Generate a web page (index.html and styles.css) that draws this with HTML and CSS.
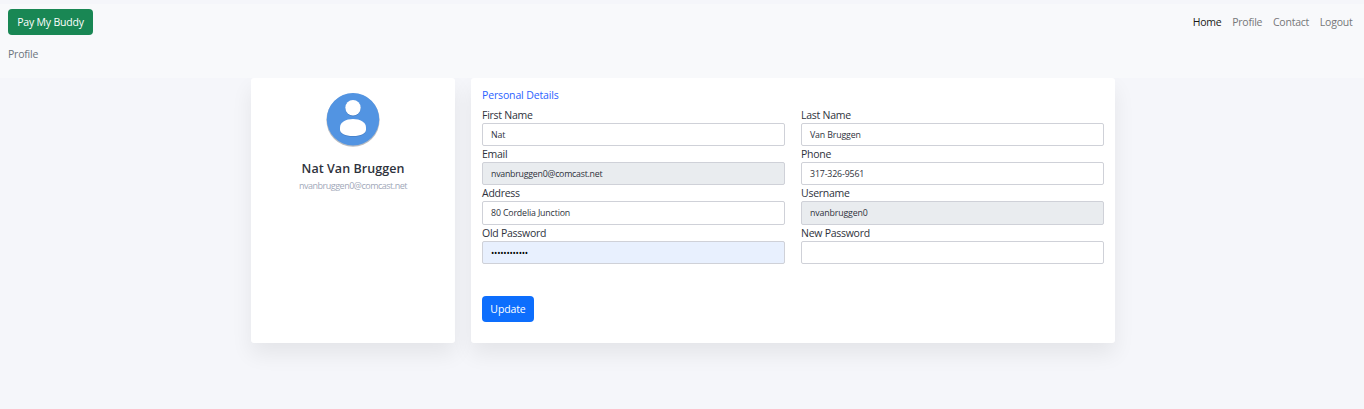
FILE: index.html
```html
<!DOCTYPE html>
<html lang="en">
<head>
<meta charset="utf-8">
<title>Pay My Buddy - Profile</title>
<link rel="stylesheet" href="styles.css">
</head>
<body>
<header class="header">
  <nav class="navbar">
    <a class="btn btn-brand">Pay My Buddy</a>
    <div class="nav-links">
      <a class="nav-link active">Home</a>
      <a class="nav-link">Profile</a>
      <a class="nav-link">Contact</a>
      <a class="nav-link">Logout</a>
    </div>
  </nav>
  <div class="breadcrumb">Profile</div>
</header>
<main class="container">
  <section class="card user-card">
    <svg class="avatar" viewBox="0 0 56 58">
      <circle cx="28" cy="29.2" r="26.6" fill="#b9bcc1"/>
      <circle cx="28" cy="28.2" r="26.2" fill="#5294e2"/>
      <circle cx="28" cy="17.600" r="7.800" fill="#437ec6"/>
      <path d="M15 37.300C15 31 21 28.500 28 28.500s13 3 13 8.800v2.200c0 3.600-5 6.300-13 6.300s-13-2.700-13-6.300z" fill="#437ec6"/>
      <circle cx="28" cy="16.800" r="7.700" fill="#fff"/>
      <path d="M15 36.500C15 31 21 28 28 28s13 3 13 8.500v2.200c0 3.600-5 6.300-13 6.300s-13-2.700-13-6.300z" fill="#fff"/>
    </svg>
    <h5 class="user-name">Nat Van Bruggen</h5>
    <div class="user-email">nvanbruggen0@comcast.net</div>
  </section>
  <section class="card details-card">
    <h6 class="section-title">Personal Details</h6>
    <form class="fields">
      <div class="field"><label>First Name</label><div class="control">Nat</div></div>
      <div class="field"><label>Last Name</label><div class="control">Van Bruggen</div></div>
      <div class="field"><label>Email</label><div class="control disabled email">nvanbruggen0@comcast.net</div></div>
      <div class="field"><label>Phone</label><div class="control">317-326-9561</div></div>
      <div class="field"><label>Address</label><div class="control tall">80 Cordelia Junction</div></div>
      <div class="field"><label>Username</label><div class="control tall disabled">nvanbruggen0</div></div>
      <div class="field"><label>Old Password</label><div class="control autofill">••••••••••••</div></div>
      <div class="field"><label>New Password</label><div class="control"></div></div>
    </form>
    <a class="btn btn-update">Update</a>
  </section>
</main>
</body>
</html>
```
FILE: styles.css
```css
* { box-sizing: border-box; }
body {
  margin: 0;
  padding-top: 4px;
  min-height: 409px;
  background: #f5f6fa;
  color: #2e323c;
  font-family: "Open Sans", "Noto Sans", sans-serif;
  font-size: 10.5px;
  line-height: 16px;
  letter-spacing: -0.22px;
}
h5, h6 { margin: 0; }
.header { height: 74px; padding: 5px 8px 0; background: #f8f9fb; }
.navbar { display: flex; justify-content: space-between; height: 26px; }
.btn {
  display: flex;
  align-items: center;
  justify-content: center;
  height: 26px;
  border-radius: 4px;
  color: #fff;
}
.btn-brand { width: 85px; background: #198754; letter-spacing: -.18px; }
.nav-links { display: flex; gap: 10.7px; padding: 5px 3.5px 0 0; }
.nav-link { color: #767779; }
.nav-link.active { color: #191919; }
.breadcrumb { margin-top: 11px; color: #6c757d; }
.container {
  display: flex;
  gap: 16px;
  width: 864px;
  height: 265px;
  margin-left: 251px;
}
.card {
  background: #fff;
  border-radius: 3px;
  box-shadow: 0 11px 21px rgba(0, 0, 0, .07);
  clip-path: inset(0 -40px -50px -40px);
}
.user-card {
  width: 204px;
  padding-top: 13px;
  display: flex;
  flex-direction: column;
  align-items: center;
}
.avatar { width: 56px; height: 58px; }
.user-name { margin-top: 11px; font-size: 12.5px; line-height: 17px; font-weight: 600; letter-spacing: .05px; }
.user-email { margin-top: 2px; font-size: 9px; line-height: 14px; color: #9fa8b9; letter-spacing: -.49px; }
.details-card { width: 644px; padding: 9px 11px 0; }
.section-title { font-size: 10.5px; line-height: 16px; font-weight: 500; letter-spacing: -.14px; color: #2b62ff; }
.fields {
  display: grid;
  grid-template-columns: 1fr 1fr;
  grid-template-rows: 39px 39px 40px 39px;
  column-gap: 16px;
  margin-top: 4px;
}
.field label { display: block; height: 16px; letter-spacing: -.26px; }
.control {
  height: 23px;
  padding: 0 8px;
  border: 1px solid #cfd1d8;
  border-radius: 2px;
  font-size: 8.8px;
  line-height: 22px;
  letter-spacing: -.15px;
}
.control.tall { height: 24px; }
.control.email { letter-spacing: -.24px; }
.disabled { background: #e9ecef; }
.control.autofill { background: #e8f0fe; color: #000; letter-spacing: -.23px; }
.btn-update { width: 52px; margin-top: 32px; background: #0d6efd; letter-spacing: -.12px; }
```
